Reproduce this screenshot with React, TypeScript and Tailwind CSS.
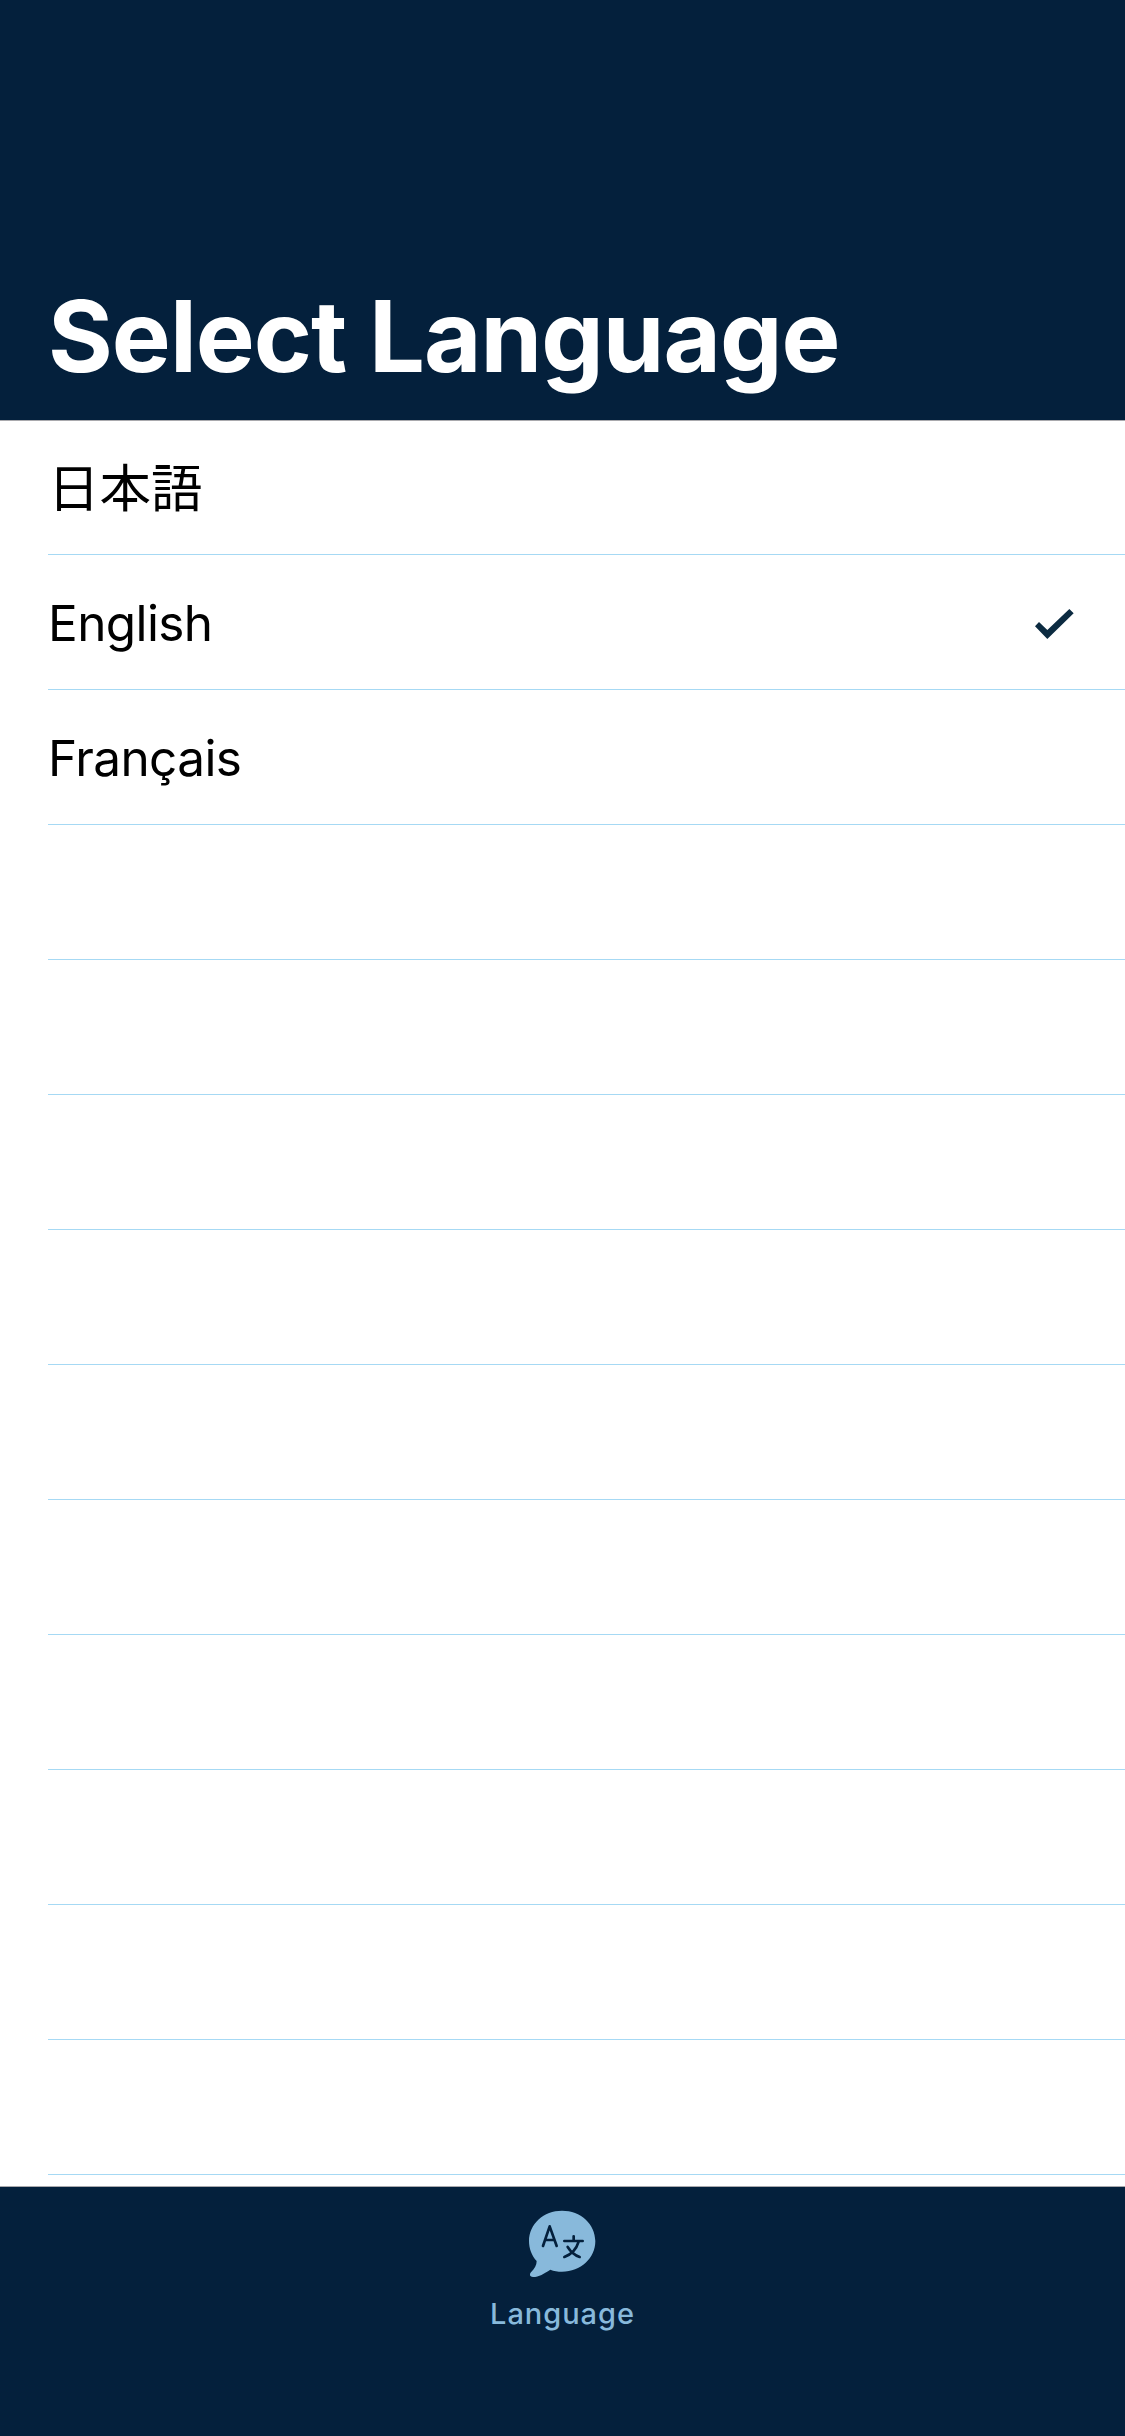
const languages = [
  { name: '日本語', lang: 'ja', selected: false },
  { name: 'English', lang: 'en', selected: true },
  { name: 'Français', lang: 'fr', selected: false },
];
const EMPTY_ROWS = 10;

function CheckIcon() {
  return (
    <svg className="mt-[3px] h-[30px] w-[39px]" viewBox="90 117 117 90" fill="#0c2b41" aria-hidden="true">
      <path d="M90 169 102 156 127 180 193 117 206 130 127 207Z" />
    </svg>
  );
}

function LanguageIcon() {
  return (
    <svg className="h-[67px] w-[67px]" viewBox="177 150 201 201" fill="none" aria-hidden="true">
      <path
        fill="#88b9db"
        d="M276 152C332 152 376 192 376 243C376 294 332 335 276 335C263 335 252 333 241 329C222 341 207 351 189 351C180 351 177 344 183 337C194 325 200 316 200 303C185 287 177 266 177 243C177 192 221 152 276 152Z"
      />
      <g stroke="#04203c" strokeWidth="8" strokeLinecap="round" strokeLinejoin="round">
        <path d="M219 258 239 199 260 258M226 240H253" />
        <path d="M311 229V242M283 243H338M326 245C319 268 306 283 283 291M293 261C303 277 314 286 329 291" />
      </g>
    </svg>
  );
}

export default function App() {
  return (
    <div className="flex h-[2436px] w-[1125px] flex-col bg-white font-['Inter','Noto_Sans_CJK_JP',sans-serif]">
      <header className="flex h-[421px] shrink-0 items-end border-b border-[#a9a9ad] bg-[#04203c] pb-[24px] pl-[48px]">
        <h1 className="text-[99px] leading-[120px] font-bold tracking-[-0.95px] whitespace-nowrap text-white">
          Select Language
        </h1>
      </header>
      <main className="min-h-0 flex-1 overflow-hidden">
        <ul className="-mt-px pl-[48px]">
          {languages.map(({ name, lang, selected }) => (
            <li
              key={name}
              className="flex h-[135px] items-center justify-between border-b border-[#a6d9f4] pr-[51px] text-black"
            >
              <span
                lang={lang}
                className={
                  lang === 'ja'
                    ? 'pt-px text-[51.5px] leading-[60px]'
                    : 'pt-[2px] text-[49.5px] leading-[60px] tracking-[-0.6px]'
                }
              >
                {name}
              </span>
              {selected && <CheckIcon />}
            </li>
          ))}
          {Array.from({ length: EMPTY_ROWS }, (_, i) => (
            <li key={i} className="h-[135px] border-b border-[#a6d9f4]" />
          ))}
        </ul>
      </main>
      <nav className="flex h-[250px] shrink-0 flex-col items-center border-t border-[#a9a9ad] bg-[#04203c] pt-[23px]">
        <button className="flex flex-col items-center text-[#88b9db]">
          <LanguageIcon />
          <span className="mt-[19px] text-[29px] leading-[36px] font-medium tracking-[0.95px]">Language</span>
        </button>
      </nav>
    </div>
  );
}
